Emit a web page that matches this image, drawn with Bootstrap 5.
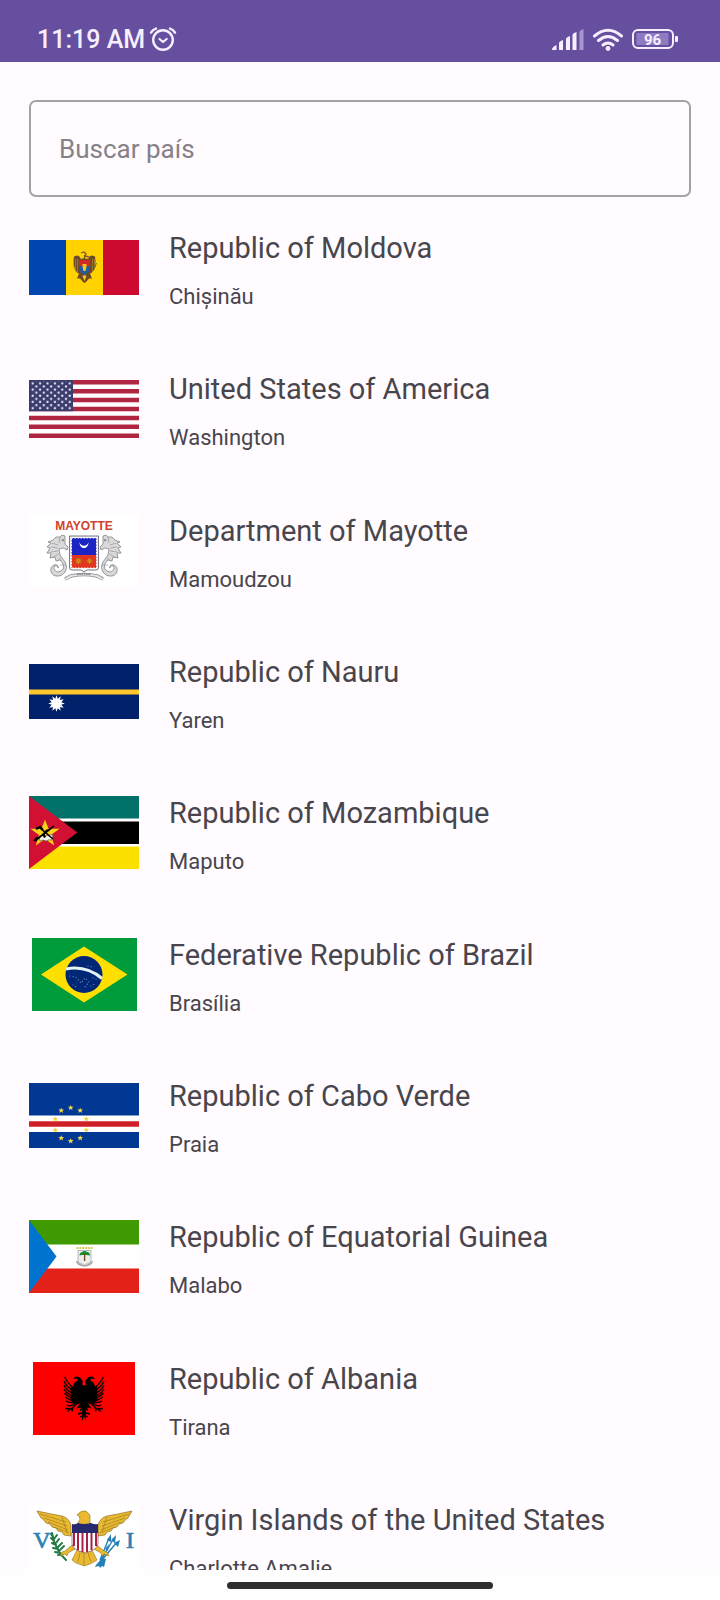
<!DOCTYPE html>
<html lang="es">
<head>
<meta charset="utf-8">
<meta name="viewport" content="width=device-width, initial-scale=1">
<title>Países</title>
<link href="https://cdn.jsdelivr.net/npm/bootstrap@5.3.0/dist/css/bootstrap.min.css" rel="stylesheet">
<style>
  body { font-family: Roboto, "Noto Sans", sans-serif; background: #fffbff; color: #48454c; }
  .status-bar { height: 62px; background: #674fa0; color: #f5efff; padding: 18px 41px 0 37px; }
  .clock { font-size: 25px; line-height: 48px; font-weight: 500; }
  .search-area { padding: 38px 29px 26px; }
  .search-box { height: 97px; border: 2px solid #a6a1a6; border-radius: 7px; background: transparent; padding: 0 28px; font-size: 26px; color: #48454c; }
  .search-box:focus { background: transparent; border-color: #674fa0; box-shadow: none; }
  .search-box::placeholder { color: #858187; opacity: 1; }
  .country { height: 141px; padding: 0 29px; gap: 30px; }
  .country:nth-child(3n+2) { height: 142px; }
  .flag { width: 110px; height: 73px; margin-top: 8px; }
  .country-name { font-size: 29px; line-height: 50px; font-weight: 400; }
  .capital { font-size: 22px; line-height: 28px; margin-top: 10px; }
  .gesture-bar { height: 30px; background: #fffeff; padding-top: 12px; }
  .pill { width: 37%; height: 7px; background: #2f2f30; }
</style>
<script src="https://cdn.jsdelivr.net/npm/bootstrap@5.3.0/dist/js/bootstrap.bundle.min.js"></script>
</head>
<body class="d-flex flex-column vh-100 overflow-hidden">

<header class="status-bar d-flex justify-content-between flex-shrink-0">
  <div class="d-flex align-items-center gap-1">
    <span class="clock">11:19 AM</span>
    <svg width="28" height="28" viewBox="0 0 28 28" fill="none" stroke="currentColor" stroke-linecap="round" stroke-linejoin="round" aria-label="Alarma">
      <circle cx="14" cy="14" r="9.800" stroke-width="2.400"/>
      <path d="M10.500 13l3.500 3 3.700-3" stroke-width="2.200"/>
      <path d="M2 6.600Q3.600 3.600 7 2.600M26 6.600Q24.400 3.600 21 2.600" stroke-width="2.400"/>
    </svg>
  </div>
  <div class="d-flex align-items-center gap-2">
    <svg width="33" height="24" viewBox="0 0 33 24" fill="currentColor" aria-label="Señal">
      <path d="M1 22q0-3 4.500-5v5zM8 22v-7q0-1.500 4-3V22zM15 22V11q0-1.500 4-3V22zM21.500 22V7q0-1.500 4-3V22z"/>
      <path d="M28.500 22V4q0-1.500 4-3V22z" opacity=".45"/>
    </svg>
    <svg width="32" height="24" viewBox="0 0 32 24" fill="none" stroke="currentColor" stroke-width="3" stroke-linecap="round" aria-label="Wi-Fi">
      <path d="M2.500 8Q16-3.500 29.500 8M6.500 12.500Q16 4.500 25.500 12.500M11 17Q16 13 21 17"/>
      <circle cx="16" cy="20.500" r="2.400" fill="currentColor" stroke="none"/>
    </svg>
    <svg width="47" height="22" viewBox="0 0 47 22" aria-label="Batería">
      <rect x="1" y="1" width="40" height="18" rx="5" fill="none" stroke="currentColor" stroke-width="2"/>
      <rect x="4.500" y="4" width="32" height="12" rx="1" fill="#8f7bc2"/>
      <rect x="43" y="7" width="3" height="6" rx="1" fill="currentColor"/>
      <text x="20.500" y="15.500" font-size="15" font-weight="700" text-anchor="middle" fill="currentColor">96</text>
    </svg>
  </div>
</header>

<div class="search-area flex-shrink-0">
  <input type="search" class="form-control search-box" placeholder="Buscar país" aria-label="Buscar país">
</div>

<ul class="list-unstyled mb-0 flex-grow-1 overflow-hidden">

  <li class="country d-flex align-items-start">
    <svg class="flag flex-shrink-0" viewBox="0 0 110 73" aria-hidden="true">
      <path fill="#0046ae" d="M0 9h37v55H0z"/><path fill="#ffd200" d="M37 9h37v55H37z"/><path fill="#cc092f" d="M74 9h36v55H74z"/>
      <path fill="#6e4a26" d="M55 27l-3 1-2-3-2-.5-3 1-.5 4 .5 8 3 4 2 1-2 5 3 0 3 3.500 1.500 1 1.500-1 3-3.500 3 0-2-5 2-1 3-4 .5-8-.5-4-3-1-2 .5-2 3z"/>
      <path fill="none" stroke="#7b5a2c" stroke-width="1.300" d="M52 22l3-1 2 2-1 2 4 1M55.500 24v3"/>
      <path fill="none" stroke="#c9a033" stroke-width=".5" d="M46.500 28v11M48.500 28v13M63.500 28v13M65.500 28v11"/>
      <path fill="#d12a26" d="M50 29h11v6H50z"/><path fill="#205ba8" d="M50.500 35h10l-1 6-4 3-4-3z"/>
      <path fill="#f2c51c" d="M53.500 33h4v3l-1 4h-2l-1-4zM53.500 45l2-1 2 1-2 5z"/>
      <path stroke="#3f7f36" d="M67.500 32l-2 5"/><path stroke="#e2a51b" d="M44 34l2 4"/>
    </svg>
    <div><h2 class="country-name mb-0">Republic of Moldova</h2><p class="capital mb-0">Chișinău</p></div>
  </li>

  <li class="country d-flex align-items-start">
    <svg class="flag flex-shrink-0" viewBox="0 0 110 73" aria-hidden="true">
      <defs>
        <pattern id="stars" width="7.400" height="6.200" patternUnits="userSpaceOnUse" x="0" y="8">
          <circle cx="3.700" cy="3.400" r="1.200" fill="#e4e4f2"/><circle cx="0" cy=".3" r="1.200" fill="#e4e4f2"/><circle cx="7.400" cy=".3" r="1.200" fill="#e4e4f2"/><circle cx="0" cy="6.500" r="1.200" fill="#e4e4f2"/><circle cx="7.400" cy="6.500" r="1.200" fill="#e4e4f2"/>
        </pattern>
      </defs>
      <path fill="#fff" d="M0 8h110v58H0z"/>
      <path stroke="#ae2640" stroke-width="4.460" d="M0 10.230h110M0 19.150h110M0 28.070h110M0 37h110M0 45.920h110M0 54.840h110M0 63.770h110"/>
      <path fill="#3b3b6d" d="M0 8h44v31.300H0z"/><path fill="url(#stars)" d="M2 9.500h40.500v28.500H2z"/>
    </svg>
    <div><h2 class="country-name mb-0">United States of America</h2><p class="capital mb-0">Washington</p></div>
  </li>

  <li class="country d-flex align-items-start">
    <svg class="flag flex-shrink-0" viewBox="0 0 110 73" aria-hidden="true">
      <defs>
        <g id="seahorse">
          <path fill="#d9d9db" stroke="#77777a" stroke-width=".7" stroke-linejoin="round" d="M36 22l-3-1-2 2-4 0-3 3-5 2 3 1-4 4 3 1-3 5 4 0-1 5 5-1 1 4 4-1c4 3 5 9 1 11c-3 2-7 0-7-3c0-3 4-3 4 0c1-2-1-4-4-3c-5 2-4 10 2 11c8 1 13-7 9-14l-5-7-1-6 4-1 4 2 1-3-3-3z"/>
          <path fill="none" stroke="#98989b" stroke-width=".7" d="M23 29l6 2M22 33l7 1M22 38l7-1M24 43l6-3M28 47l4-3M32 26l3 1M31 51l5 0M31 23l-1 6"/>
          <circle cx="34" cy="26" r=".8" fill="#555"/>
        </g>
      </defs>
      <path fill="#fff" d="M0 0h109v73H0z"/>
      <text x="55" y="16" text-anchor="middle" font-family="Liberation Sans, sans-serif" font-size="12" font-weight="700" fill="#d1412d">MAYOTTE</text>
      <use href="#seahorse"/><use href="#seahorse" transform="matrix(-1 0 0 1 110 0)"/>
      <path fill="#f0f0f4" stroke="#5b5963" stroke-width=".8" d="M40.500 22h29v32q0 2-3 2H58l-3 2-3-2h-8.500q-3 0-3-2z"/>
      <path fill="#1d24c4" d="M42.500 24h25v17h-25z"/><path fill="#e33621" d="M42.500 41h25v13h-25z"/>
      <path fill="none" stroke="#fff" stroke-dasharray="1.500 1.500" d="M42.500 24h25v30h-25z"/>
      <path fill="#fff" d="M50.500 28c0 8 9 8 9 0c-1 5-8 5-9 0z"/>
      <path stroke="#c88d16" stroke-width="1.200" d="M46.500 47h6M49.500 44v6M47.500 45l4 4M51.500 45l-4 4M57.500 47h6M60.500 44.500v5M59 45l3 4M62 45l-3 4"/>
      <path fill="none" stroke="#8a8a8e" stroke-width="3.600" d="M36 65l6-3q13-3 26 0l6 3"/>
      <path fill="none" stroke="#e5e5e8" stroke-width="2.200" d="M36.500 65l5.500-3q13-3 26 0l5.500 3"/>
      <path fill="none" stroke="#66666a" stroke-width="1.200" stroke-dasharray="1.500 .8" d="M48 60.500q7-1 14 0"/>
    </svg>
    <div><h2 class="country-name mb-0">Department of Mayotte</h2><p class="capital mb-0">Mamoudzou</p></div>
  </li>

  <li class="country d-flex align-items-start">
    <svg class="flag flex-shrink-0" viewBox="0 0 110 73" aria-hidden="true">
      <path fill="#002169" d="M0 9h110v55H0z"/><path fill="#ffc72e" d="M0 34.500h110v5H0z"/>
      <polygon fill="#fff" transform="translate(27.500 48.500)" points="8.300,0 4.800,1.300 7.200,4.200 3.500,3.500 4.200,7.200 1.300,4.800 0,8.300 -1.300,4.800 -4.200,7.200 -3.500,3.500 -7.200,4.200 -4.800,1.300 -8.300,0 -4.800,-1.300 -7.200,-4.200 -3.500,-3.500 -4.200,-7.200 -1.300,-4.800 0,-8.300 1.300,-4.800 4.200,-7.200 3.500,-3.500 7.200,-4.200 4.800,-1.300"/>
    </svg>
    <div><h2 class="country-name mb-0">Republic of Nauru</h2><p class="capital mb-0">Yaren</p></div>
  </li>

  <li class="country d-flex align-items-start">
    <svg class="flag flex-shrink-0" viewBox="0 0 110 73" aria-hidden="true">
      <path fill="#fff" d="M0 0h110v73H0z"/><path fill="#007168" d="M0 0h110v22.500H0z"/><path d="M0 25.500h110V48H0z"/><path fill="#fce100" d="M0 50.500h110V73H0z"/>
      <path fill="#d21034" d="M0 0l48.300 36.500L0 73z"/>
      <path fill="#fcd116" d="M16 23.500l3.500 9.200h11L22 39l3.200 10.500-9.200-6.500-9.200 6.500L10 39l-8.500-6.300h11z"/>
      <path fill="#f3f3ec" stroke="#555" stroke-width=".6" d="M10 40q4-2 7 0q4-2 7-1l-1 5q-3-1-6 1q-3-2-6 0z"/>
      <path fill="none" stroke="#000" stroke-width="1.600" d="M7 44L25 30M11 32l13 11"/>
      <path fill="none" stroke="#000" stroke-width="2.400" d="M7 33l4-2 3 3M15 37l4-3"/>
      <path d="M4 44.500l4-4 2 2-3 3zM13 38l2 4 2-1-2-4z"/>
    </svg>
    <div><h2 class="country-name mb-0">Republic of Mozambique</h2><p class="capital mb-0">Maputo</p></div>
  </li>

  <li class="country d-flex align-items-start">
    <svg class="flag flex-shrink-0" viewBox="0 0 110 73" aria-hidden="true">
      <path fill="#009b3a" d="M3 0h105v73H3z"/><path fill="#fedf00" d="M12 36.500L55 8.500l43.500 28L55 64.500z"/>
      <circle cx="55" cy="36.500" r="18.500" fill="#002776"/>
      <path fill="none" stroke="#e5f3f3" stroke-width="3" d="M37 31Q57 27 73 40.500"/>
      <path fill="none" stroke="#8198c4" stroke-width="1.200" stroke-linecap="round" stroke-dasharray="0 3.200" d="M41 38l6 1 5 6 4-5 4 4-4 5M62 48l5-3M44 47l5 3M59 28l6 1M67 41l-5-2"/>
    </svg>
    <div><h2 class="country-name mb-0">Federative Republic of Brazil</h2><p class="capital mb-0">Brasília</p></div>
  </li>

  <li class="country d-flex align-items-start">
    <svg class="flag flex-shrink-0" viewBox="0 0 110 73" aria-hidden="true">
      <defs><path id="star" fill="#f3d443" d="M0-2.800l.8 1.800 2 .1-1.500 1.300.5 2L0 1.300l-1.800 1.100.5-2-1.500-1.300 2-.1z"/></defs>
      <path fill="#003893" d="M0 4h110v65H0z"/><path fill="#fff" d="M0 36.500h110V53H0z"/><path fill="#cf2027" d="M0 42.300h110v5.400H0z"/>
      <use href="#star" x="41.700" y="28.700"/><use href="#star" x="51.200" y="31.500"/><use href="#star" x="57.300" y="40"/><use href="#star" x="57.300" y="51"/><use href="#star" x="51.200" y="59"/>
      <use href="#star" x="41.700" y="62"/><use href="#star" x="32.200" y="59"/><use href="#star" x="26.200" y="51"/><use href="#star" x="26.200" y="40"/><use href="#star" x="32.200" y="31.500"/>
    </svg>
    <div><h2 class="country-name mb-0">Republic of Cabo Verde</h2><p class="capital mb-0">Praia</p></div>
  </li>

  <li class="country d-flex align-items-start">
    <svg class="flag flex-shrink-0" viewBox="0 0 110 73" aria-hidden="true">
      <path fill="#fff" d="M0 0h110v73H0z"/><path fill="#3e9a00" d="M0 0h110v24.500H0z"/><path fill="#e32118" d="M0 48.500h110V73H0z"/><path fill="#0073ce" d="M0 0l27.500 36.500L0 73z"/>
      <path fill="#eceded" stroke="#9b9b9b" stroke-width=".7" d="M49 30.500h13v10q0 3-4 3.500l-2.500 1.500-2.500-1.500q-4-.5-4-3.500z"/>
      <path fill="none" stroke="#dec84c" stroke-width="2" stroke-dasharray="2 .8" d="M47.500 28h16"/>
      <path fill="#168c2b" d="M50.500 35.500q0-3 2.500-3.500 2.500-2 5 0 3 0 3 3.500l-3.500-.5H53z"/><path stroke="#7b4b25" stroke-width="1.400" d="M55.600 34v7"/>
      <path fill="none" stroke="#a7a7a7" stroke-width="1.500" d="M47.500 41q1 4 8 5Q62.500 45 63.500 41"/>
    </svg>
    <div><h2 class="country-name mb-0">Republic of Equatorial Guinea</h2><p class="capital mb-0">Malabo</p></div>
  </li>

  <li class="country d-flex align-items-start">
    <svg class="flag flex-shrink-0" viewBox="0 0 110 73" aria-hidden="true">
      <defs>
        <g id="half-eagle">
          <path d="M55.200 24l-2-1.500.5-3.500-3-4-4-.5-3 2.500 4-.5 1 2-3 2-2 4-2-1v15l4 4 5-1-3 5 4-1-1 4 3-2-1 4 2 2 2.500 6z"/>
          <path fill="none" stroke="#000" stroke-width="1.300" d="M43 25Q38 20 35.500 15M43 28Q37 24 35 19M43 31Q37 28 35 23M43 34Q37 31 35 27M43 36.500Q38 34 35.500 31M44 39Q39 37 36 35M45 40.500Q40 41 37 39M46 42Q41 45 38 43M48 42l-6 5-6-.5M42 47l-4 2.500M44 46l-1 3.500M53 51l-4 1M53 54l-2 1"/>
        </g>
      </defs>
      <path fill="#f00" d="M4 0h102v73H4z"/>
      <use href="#half-eagle"/><use href="#half-eagle" transform="matrix(-1 0 0 1 110 0)"/>
    </svg>
    <div><h2 class="country-name mb-0">Republic of Albania</h2><p class="capital mb-0">Tirana</p></div>
  </li>

  <li class="country d-flex align-items-start">
    <svg class="flag flex-shrink-0" viewBox="0 0 110 73" aria-hidden="true">
      <defs>
        <g id="wing">
          <path fill="#e9b92f" stroke="#92722a" stroke-width=".7" stroke-linejoin="round" d="M8 8q14 3 25 5 7 2 9 9v11l-7-1-2-3-4-1-2-3-4-1-2-3-4-1-2-3-3-2z"/>
          <path fill="none" stroke="#92722a" stroke-width=".6" d="M11 11l26 8M15 15l23 8M19 19l20 8M25 24l15 6M33 14l5 15"/>
          <path fill="#e9b92f" stroke="#92722a" stroke-width=".6" d="M43 42l-7 6-3 1-2 4 5-2 2 2 1-3 7-4z"/>
        </g>
      </defs>
      <path fill="#fff" d="M0 0h110v73H0z"/>
      <g font-family="Liberation Serif, serif" font-size="24" fill="#2b80b5" stroke="#2b80b5" stroke-width=".7" text-anchor="middle"><text x="13" y="45">V</text><text x="101" y="45">I</text></g>
      <path fill="none" stroke="#247a44" stroke-width="2" stroke-linecap="round" d="M23 30q3 17 14 27M24 34l-2-3M25 38l-3-3M27 42l-4-2M29 46l-5-1M31 50l-5-1M25 36l3-4M27 40l3-4M29 44l4-4M31 47l4-4M34 51l-5 1"/>
      <path fill="none" stroke="#247fb5" stroke-width="1.400" d="M71 57l9-22M73 57l15-18M72 57l13-22"/>
      <path fill="#247fb5" d="M82 31l-4 6 4 2zM87 32l-5 5 4 3zM91 37l-6 3 4 4zM80 41l-4 5 3 2z"/>
      <path fill="#247fb5" d="M67 62l6-7 4 1-2 8-2-1-2 2-1-2-4 1z"/>
      <use href="#wing"/><use href="#wing" transform="matrix(-1 0 0 1 111 0)"/>
      <path fill="#e9b92f" stroke="#92722a" stroke-width=".6" d="M48 22l3-6-1-3-2-1q4-5 9-4l4 4v9zM48 47h15l5 10-5 3-2 1-6 2-5-2-3-1-4-3zM51 50l-2 9M55 50v12M59 50l3 9"/>
      <path fill="#fff" stroke="#6f3038" stroke-width=".6" d="M43 29h26v12q-1 6-13 9-12-3-13-9z"/>
      <path stroke="#a82248" stroke-width="2" d="M45 29v14M49 29v18M53.500 29v20M58 29v20M62.500 29v18M67 29v14"/>
      <path fill="#282a70" d="M43 21q3 1 6-1 6 2 13 0 4 2 7 1v9H43z"/>
    </svg>
    <div><h2 class="country-name mb-0">Virgin Islands of the United States</h2><p class="capital mb-0">Charlotte Amalie</p></div>
  </li>
</ul>

<footer class="gesture-bar d-flex justify-content-center flex-shrink-0"><div class="pill rounded-pill"></div></footer>
</body>
</html>
